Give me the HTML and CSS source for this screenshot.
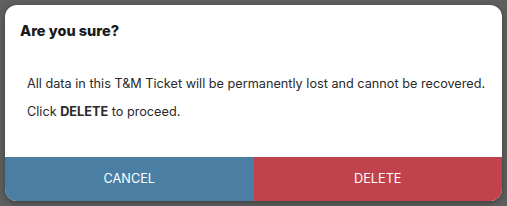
FILE: index.html
```html
<!DOCTYPE html>
<html lang="en">
<head>
    <meta charset="UTF-8">
    <meta name="viewport" content="width=device-width, initial-scale=1.0">
    <title>Delete T&amp;M Ticket</title>
    <link rel="stylesheet" href="styles.css">
</head>
<body>
    <div class="dialog">
        <h2 class="dialog-title">Are you sure?</h2>
        <div class="dialog-body">
            <p>All data in this T&amp;M Ticket will be permanently lost and cannot be recovered.</p>
            <p>Click <strong>DELETE</strong> to proceed.</p>
        </div>
        <div class="dialog-actions">
            <button class="btn btn-cancel">CANCEL</button>
            <button class="btn btn-delete">DELETE</button>
        </div>
    </div>
</body>
</html>
```

FILE: styles.css
```css
body {
    margin: 0;
    padding: 5px;
    background: #5f5f5f;
    font-family: Inter, "Noto Sans", sans-serif;
}
.dialog {
    width: 497px;
    height: 196px;
    background: #fff;
    border-radius: 12px;
    overflow: hidden;
    display: flex;
    flex-direction: column;
    box-shadow: 0 2px 6px rgba(0, 0, 0, 0.35);
}
.dialog-title {
    margin: 0;
    padding: 16px 15px 0;
    font-size: 14.5px;
    line-height: 20px;
    font-weight: 800;
    color: #1a1a1a;
}
.dialog-body {
    flex: 1;
    padding: 34px 22px 0;
    font-size: 12.7px;
    line-height: 18px;
    color: #2a2a2a;
    white-space: nowrap;
}
.dialog-body p {
    margin: 0 0 10px;
}
.dialog-actions {
    display: flex;
    height: 44px;
}
.btn {
    flex: 1;
    border: none;
    margin: 0;
    padding: 0;
    font-family: inherit;
    font-size: 12.7px;
    line-height: 44px;
    color: #fff;
    cursor: pointer;
}
.btn-cancel {
    background: #4a7ea3;
}
.btn-delete {
    background: #c0424d;
}
```
